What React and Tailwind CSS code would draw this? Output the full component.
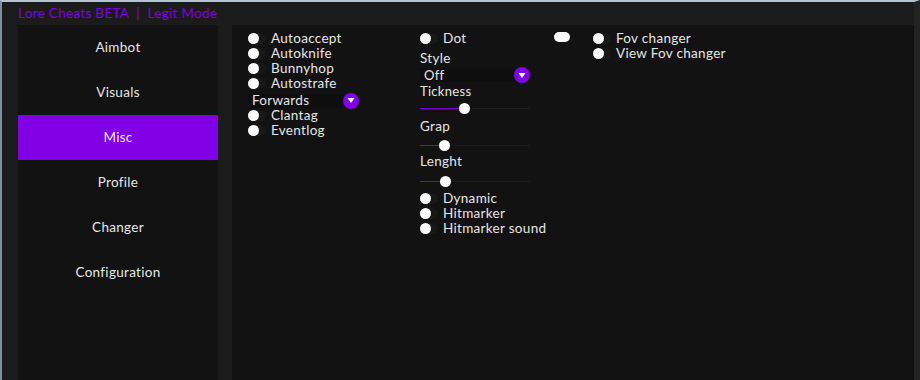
import React from "react";

const font = { fontFamily: "Lato, 'DejaVu Sans', sans-serif" };

function Toggle() {
  return (
    <span className="inline-flex h-[11px] w-[18px] shrink-0 rounded-full bg-[#181818]">
      <span className="h-[11px] w-[11px] rounded-full bg-white" />
    </span>
  );
}

function Check({ label }) {
  return (
    <div className="flex h-[15px] items-center gap-[5px]">
      <Toggle />
      <span className="whitespace-nowrap leading-none">{label}</span>
    </div>
  );
}

function Arrow() {
  return (
    <span className="flex h-4 w-4 shrink-0 items-center justify-center rounded-full bg-[#8200e6]">
      <svg width="8" height="7" viewBox="0 0 8 7">
        <path d="M0.5 1 L7.5 1 L4 6 Z" fill="white" />
      </svg>
    </span>
  );
}

function Slider({ pos }) {
  return (
    <div className="flex h-[14px] w-[110px] items-center">
      <div className="h-px bg-[#7a00d8]" style={{ width: pos - 5 }} />
      <div className="h-[11px] w-[11px] shrink-0 rounded-full bg-white" />
      <div className="h-px flex-1 bg-[#1c1c1c]" />
    </div>
  );
}

export default function App() {
  const menu = ["Aimbot", "Visuals", "Misc", "Profile", "Changer", "Configuration"];
  return (
    <div
      className="flex h-[380px] w-[920px] flex-col overflow-hidden border-l-2 border-t-2 border-r-[6px] border-l-[#7f8f9d] border-t-[#b4c2cf] border-r-[#232323] bg-[#1b1b1b] text-[13.5px] tracking-[0.3px] text-[#e6e6e6]"
      style={font}
    >
      <div className="flex h-[23px] items-center pl-4 text-[#7f00e0]">
        Lore Cheats BETA&nbsp;&nbsp;|&nbsp;&nbsp;Legit Mode
      </div>
      <div className="flex flex-1 gap-[14px] pl-4">
        <div className="flex w-[200px] flex-col bg-[#121212]">
          {menu.map((m) => (
            <div
              key={m}
              className={
                "flex h-[45px] items-center justify-center " +
                (m === "Misc" ? "bg-[#8200e6] text-[#f0e6ff]" : "")
              }
            >
              {m}
            </div>
          ))}
        </div>
        <div className="flex flex-1 bg-[#121212] pl-4 pt-[6px]">
          <div className="flex w-[172px] flex-col">
            <Check label="Autoaccept" />
            <Check label="Autoknife" />
            <Check label="Bunnyhop" />
            <Check label="Autostrafe" />
            <div className="mt-[2px] flex h-[15px] items-center">
              <div className="flex h-[14px] w-[95px] items-center bg-[#0e0e0e] pl-1 leading-none">Forwards</div>
              <Arrow />
            </div>
            <Check label="Clantag" />
            <Check label="Eventlog" />
          </div>
          <div className="flex w-[134px] flex-col leading-none">
            <Check label="Dot" />
            <div className="mt-[5px] flex h-[16px] items-center">Style</div>
            <div className="mt-[1px] flex h-[14px] items-center">
              <div className="flex h-[14px] w-[94px] items-center bg-[#0e0e0e] pl-1 text-[13px]">Off</div>
              <Arrow />
            </div>
            <div className="mt-[2px] flex h-[14px] items-center text-[13px]">Tickness</div>
            <div className="mt-[3px]"><Slider pos={44} /></div>
            <div className="mt-[5px] flex h-[14px] items-center">Grap</div>
            <div className="mt-1"><Slider pos={24} /></div>
            <div className="mt-[3px] flex h-[14px] items-center">Lenght</div>
            <div className="mt-[5px]"><Slider pos={25} /></div>
            <div className="mt-[3px]">
              <Check label="Dynamic" />
              <Check label="Hitmarker" />
              <Check label="Hitmarker sound" />
            </div>
          </div>
          <div className="flex flex-col">
            <div className="flex h-[15px] items-start">
              <span className="mt-[1px] h-[10px] w-4 rounded-full bg-white" />
              <div className="ml-[23px] flex flex-col">
                <Check label="Fov changer" />
                <Check label="View Fov changer" />
              </div>
            </div>
          </div>
        </div>
      </div>
    </div>
  );
}
